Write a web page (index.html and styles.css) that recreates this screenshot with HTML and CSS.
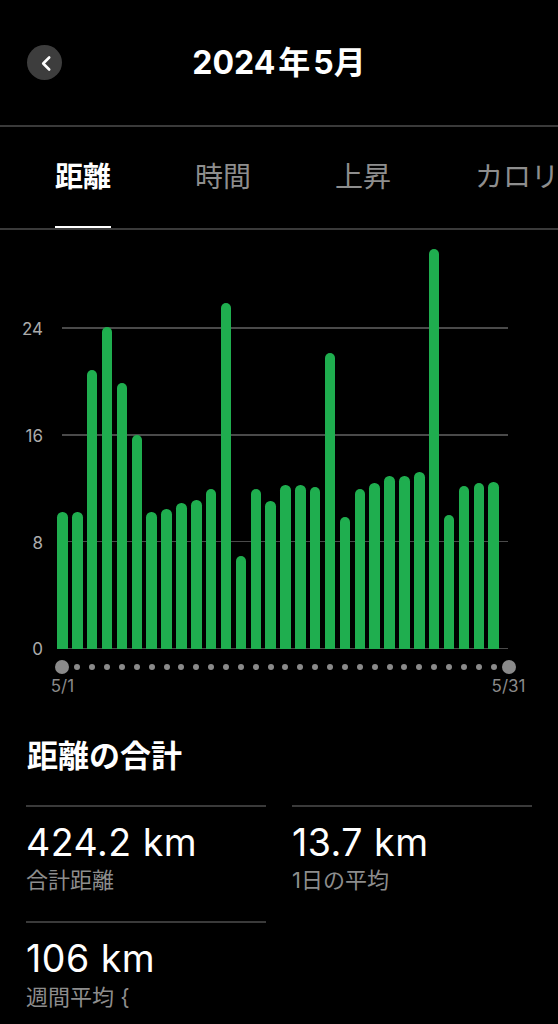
FILE: index.html
```html
<!DOCTYPE html>
<html lang="ja">
<head>
<meta charset="utf-8">
<title>2024年5月</title>
<link rel="stylesheet" href="styles.css">
</head>
<body>
<div class="screen">
  <header class="topbar">
    <div class="topbar-side">
      <button class="back" aria-label="戻る">
        <svg width="35" height="35" viewBox="0 0 35 35"><polyline points="22.2,12.5 16.2,18.5 22.2,24.5" fill="none" stroke="#fff" stroke-width="2.6" stroke-linecap="round" stroke-linejoin="round"/></svg>
      </button>
    </div>
    <h1 class="title">2024<span class="gap">年</span>5月</h1>
    <div class="topbar-side"></div>
  </header>

  <nav class="tabs">
    <span class="tab active">距離</span>
    <span class="tab">時間</span>
    <span class="tab">上昇</span>
    <span class="tab">カロリー</span>
  </nav>

  <section class="chart">
    <div class="yaxis">
      <span>24</span><span>16</span><span>8</span><span>0</span>
    </div>
    <div class="plot">
      <div class="bars">
        <div class="slot"><div class="bar" style="height:137.3px"></div></div>
        <div class="slot"><div class="bar" style="height:137.3px"></div></div>
        <div class="slot"><div class="bar" style="height:279.3px"></div></div>
        <div class="slot"><div class="bar" style="height:322px"></div></div>
        <div class="slot"><div class="bar" style="height:266.6px"></div></div>
        <div class="slot"><div class="bar" style="height:214.3px"></div></div>
        <div class="slot"><div class="bar" style="height:137.6px"></div></div>
        <div class="slot"><div class="bar" style="height:140px"></div></div>
        <div class="slot"><div class="bar" style="height:146.6px"></div></div>
        <div class="slot"><div class="bar" style="height:149.3px"></div></div>
        <div class="slot"><div class="bar" style="height:160px"></div></div>
        <div class="slot"><div class="bar" style="height:346px"></div></div>
        <div class="slot"><div class="bar" style="height:93.6px"></div></div>
        <div class="slot"><div class="bar" style="height:160.3px"></div></div>
        <div class="slot"><div class="bar" style="height:148.6px"></div></div>
        <div class="slot"><div class="bar" style="height:164.3px"></div></div>
        <div class="slot"><div class="bar" style="height:164.3px"></div></div>
        <div class="slot"><div class="bar" style="height:162px"></div></div>
        <div class="slot"><div class="bar" style="height:296px"></div></div>
        <div class="slot"><div class="bar" style="height:132.6px"></div></div>
        <div class="slot"><div class="bar" style="height:160.6px"></div></div>
        <div class="slot"><div class="bar" style="height:166px"></div></div>
        <div class="slot"><div class="bar" style="height:173.3px"></div></div>
        <div class="slot"><div class="bar" style="height:173.3px"></div></div>
        <div class="slot"><div class="bar" style="height:177px"></div></div>
        <div class="slot"><div class="bar" style="height:400px"></div></div>
        <div class="slot"><div class="bar" style="height:134.3px"></div></div>
        <div class="slot"><div class="bar" style="height:163.3px"></div></div>
        <div class="slot"><div class="bar" style="height:166.6px"></div></div>
        <div class="slot"><div class="bar" style="height:167px"></div></div>
        <div class="slot"></div>
      </div>
      <div class="dots">
        <span class="dot big"></span>
        <span class="dot"></span><span class="dot"></span><span class="dot"></span><span class="dot"></span><span class="dot"></span>
        <span class="dot"></span><span class="dot"></span><span class="dot"></span><span class="dot"></span><span class="dot"></span>
        <span class="dot"></span><span class="dot"></span><span class="dot"></span><span class="dot"></span><span class="dot"></span>
        <span class="dot"></span><span class="dot"></span><span class="dot"></span><span class="dot"></span><span class="dot"></span>
        <span class="dot"></span><span class="dot"></span><span class="dot"></span><span class="dot"></span><span class="dot"></span>
        <span class="dot"></span><span class="dot"></span><span class="dot"></span><span class="dot"></span>
        <span class="dot big"></span>
      </div>
      <div class="xlabels"><span>5/1</span><span>5/31</span></div>
    </div>
  </section>

  <section class="summary">
    <h2 class="summary-title">距離の合計</h2>
    <div class="stats">
      <div class="stat">
        <div class="value">424.2 km</div>
        <div class="label">合計距離</div>
      </div>
      <div class="stat">
        <div class="value">13.7 km</div>
        <div class="label">1日の平均</div>
      </div>
      <div class="stat">
        <div class="value">106 km</div>
        <div class="label">週間平均 {</div>
      </div>
    </div>
  </section>
</div>
</body>
</html>
```

FILE: styles.css
```css
html, body {
  margin: 0;
  padding: 0;
  background: #000;
}

body {
  font-family: Inter, "Noto Sans CJK JP", sans-serif;
  color: #fff;
  overflow: hidden;
}

.screen {
  width: 558px;
  height: 1024px;
  overflow: hidden;
}

/* Top bar */
.topbar {
  height: 125px;
  display: grid;
  grid-template-columns: 1fr auto 1fr;
  align-items: center;
  border-bottom: 2px solid #3a3a3a;
}

.topbar-side {
  display: flex;
  align-items: center;
}

.back {
  margin: 0 0 0 27px;
  padding: 0;
  width: 35px;
  height: 35px;
  border: 0;
  border-radius: 50%;
  background: #3d3d3d;
  display: flex;
  align-items: center;
  justify-content: center;
}

.back svg {
  display: block;
}

.title {
  margin: 0;
  font-size: 32px;
  line-height: 40px;
  font-weight: 700;
  white-space: nowrap;
}

.title .gap {
  margin: 0 3px;
}

/* Tabs */
.tabs {
  display: flex;
  gap: 84px;
  padding: 36px 0 0 55px;
  border-bottom: 2px solid #3a3a3a;
  white-space: nowrap;
  overflow: hidden;
}

.tab {
  flex: none;
  font-size: 28px;
  line-height: 28px;
  color: #8e8e8e;
  padding-bottom: 35px;
  border-bottom: 3px solid transparent;
  margin-bottom: -1px;
}

.tab.active {
  color: #fff;
  font-weight: 700;
  border-bottom-color: #fff;
}

/* Chart */
.chart {
  display: flex;
}

.yaxis {
  width: 55px;
  box-sizing: border-box;
  padding: 89.3px 12px 0 0;
  display: flex;
  flex-direction: column;
  align-items: flex-end;
  gap: 86.67px;
  font-size: 17px;
  line-height: 20px;
  color: #ababab;
}

.plot {
  width: 461px;
  padding-top: 19.3px;
}

.bars {
  height: 400px;
  display: grid;
  grid-template-columns: repeat(31, 1fr);
  align-items: end;
  background: repeating-linear-gradient(to top, #4a4a4a 0 1.5px, transparent 1.5px 106.67px) 7.4px 0 / 446.2px 100% no-repeat;
}

.slot {
  height: 100%;
  display: flex;
  align-items: flex-end;
  justify-content: center;
}

.bar {
  width: 10.5px;
  border-radius: 5.25px 5.25px 0 0;
  background: #1fae4f;
}

.dots {
  margin-top: 10.4px;
  height: 14px;
  display: grid;
  grid-template-columns: repeat(31, 1fr);
  align-items: center;
  justify-items: center;
}

.dot {
  width: 6px;
  height: 6px;
  border-radius: 50%;
  background: #8a8a8a;
}

.dot.big {
  width: 14px;
  height: 14px;
}

.xlabels {
  margin: 2.5px -12.55px 0;
  display: flex;
  justify-content: space-between;
  font-size: 17px;
  line-height: 20px;
  color: #8a8a8a;
}

.xlabels span {
  width: 40px;
  text-align: center;
}

/* Summary */
.summary {
  padding: 0 26px;
}

.summary-title {
  margin: 41.6px 0 31.2px 1px;
  font-size: 31px;
  line-height: 36px;
  font-weight: 700;
}

.stats {
  display: grid;
  grid-template-columns: 240px 240px;
  column-gap: 26px;
  row-gap: 27px;
}

.stat {
  border-top: 2px solid #3a3a3a;
  padding-top: 14px;
}

.value {
  font-size: 37.5px;
  line-height: 44px;
  font-weight: 400;
  letter-spacing: 0.5px;
  white-space: nowrap;
}

.label {
  margin-top: 1.5px;
  font-size: 22px;
  line-height: 28px;
  color: #8d8d8d;
  white-space: nowrap;
}
```
